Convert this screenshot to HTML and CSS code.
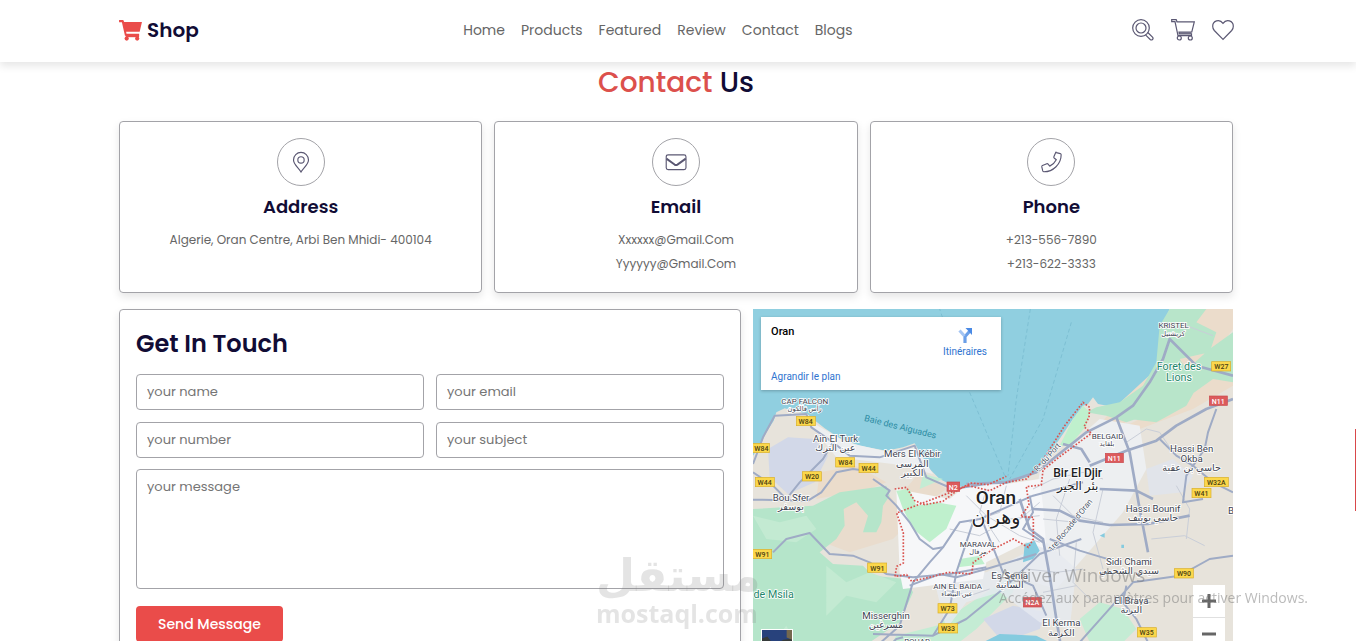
FILE: index.html
```
<!DOCTYPE html>
<html lang="en">
<head>
    <meta charset="UTF-8">
    <meta name="viewport" content="width=device-width, initial-scale=1.0">
    <title>Shop - Contact Us</title>
    <link rel="stylesheet" href="styles.css">
</head>
<body>

<header class="header">
    <a href="#" class="logo">
        <svg viewBox="0 0 24 22"><path d="M0 0h4.4l1 2H24l-2.4 10.400H7.400l.4 2H21v2H6.200L3 2.400H0z"/><circle cx="8" cy="19.500" r="2.200"/><circle cx="19" cy="19.500" r="2.200"/><path d="M7 15h14v3H7z"/></svg>
        Shop
    </a>

    <nav class="navbar">
        <a href="#home">Home</a>
        <a href="#products">Products</a>
        <a href="#featured">Featured</a>
        <a href="#review">Review</a>
        <a href="#contact">Contact</a>
        <a href="#blogs">Blogs</a>
    </nav>

    <div class="icons">
        <a href="#" aria-label="Search"><svg viewBox="0 0 22 22"><circle cx="9" cy="9" r="8.300"/><circle cx="9" cy="9" r="5"/><path d="M13.500 15.800l4.700 4.700q1.200 1 2.300 0t0-2.300l-4.700-4.700"/></svg></a>
        <a href="#" aria-label="Cart"><svg class="cart" viewBox="0 0 24 22"><path d="M.7.700h4.500l.8 2.100h17.300L20.800 13H8l.3 1.800h12.200v1.800H7L4 2.700H.7z"/><path d="M8 13.900h12.500"/><circle cx="8.300" cy="19" r="2"/><circle cx="19.300" cy="19" r="2"/></svg></a>
        <a href="#" aria-label="Favourites"><svg viewBox="0 0 22 22"><path d="M11 20.300L2.300 11.500Q.7 9.700.7 7.200C.7 1.600 7.600-.6 11 4.300 14.400-.6 21.300 1.600 21.300 7.200q0 2.500-1.600 4.300z"/></svg></a>
    </div>
</header>

<main class="contact" id="contact">
    <h1 class="heading"><span>Contact</span> Us</h1>

    <div class="icons-container">
        <div class="box">
            <svg class="box-icon" viewBox="0 0 48 48"><path d="M24 34.500C21.500 30 16.200 26.500 16.200 21.800a7.800 7.800 0 0 1 15.600 0C31.800 26.500 26.500 30 24 34.500z"/><circle cx="24" cy="21.800" r="3.300"/></svg>
            <h3>Address</h3>
            <p>Algerie, Oran Centre, Arbi Ben Mhidi- 400104</p>
        </div>
        <div class="box">
            <svg class="box-icon" viewBox="0 0 48 48"><rect x="13.800" y="16.500" width="20.600" height="15.500" rx="2"/><path class="thick" d="M14 20.500l8.500 6.200q1.500 1 3 0l8.700-6.200"/></svg>
            <h3>Email</h3>
            <p>Xxxxxx@Gmail.Com</p>
            <p>Yyyyyy@Gmail.Com</p>
        </div>
        <div class="box">
            <svg class="box-icon" viewBox="0 0 48 48"><path d="M29.500 14.200l4.200 1q.9.300.9 1.200c0 9.700-8.300 17.800-18 17.800q-.9 0-1.200-.9l-1-4.200q-.2-1 .7-1.400l4.500-1.900q.7-.3 1.300.3l1.800 2.200c3.100-1.500 5.300-3.700 6.800-6.700l-2.200-1.800q-.6-.6-.3-1.300l1.900-4.500q.3-.7.600.2z"/></svg>
            <h3>Phone</h3>
            <p>+213-556-7890</p>
            <p>+213-622-3333</p>
        </div>
    </div>

    <div class="row">
        <form action="">
            <h2>Get In Touch</h2>
            <div class="inputBox">
                <input type="text" placeholder="your name" aria-label="your name">
                <input type="email" placeholder="your email" aria-label="your email">
                <input type="text" placeholder="your number" aria-label="your number">
                <input type="text" placeholder="your subject" aria-label="your subject">
            </div>
            <textarea placeholder="your message" aria-label="your message"></textarea>
            <button type="submit" class="btn">Send Message</button>
        </form>

        <div class="map">
            <svg class="map-canvas" viewBox="0 0 1440 1050" preserveAspectRatio="xMinYMin slice">
                <!-- land -->
                <path fill="#e7e3db" d="M0 440L20 410 40 370 62 335 70 310 95 298 130 308 160 312 180 330 215 358 260 388 320 410 400 425 450 415 485 403 500 430 530 480 560 510 600 530 650 535 700 528 760 525 820 505 850 485 885 440 930 375 960 330 990 290 1005 285 1020 265 1035 285 1070 292 1100 285 1140 270 1170 240 1195 205 1215 150 1225 100 1222 60 1250 0H1440V1050H0z"/>
                <path fill="#ebdccb" d="M1250 0h190v60l-60 80-110 60-90 60-70 90-90 20 60-70 130-120zM200 490l110-20 90 50-50 20-160 30zM1080 370l120-60 100-50 80-90 60-30v90l-120 70-160 60z"/>
                <path fill="#e9dccd" d="M260 560l80-20 70 20 60 80-50 50-130 40-80-30zM500 490l80 50-70 50-60-40z"/>
                <!-- vegetation -->
                <path fill="#b8e5ca" d="M1250 0h110l-30 40 60 30-20 60-90 20 40 60-50 40-60 60-90 30-60-20-60-10 30-15 70-15 70-50 40-70 10-110zM1370 120l70-50v150l-60-10-70 50-40-50zM1180 260l90-50 70 10-40 70-90 50-80-10z"/>
                <path fill="#b5e5ca" d="M0 600L90 595 180 590 260 550 330 540 400 530 410 560 390 590 385 640 370 670 330 670 345 620 310 580 272 600 275 650 250 690 200 730 240 765 330 770 360 800 460 810 480 850 440 940 350 1000 330 1050H0z"/>
                <path fill="#c3ead2" d="M0 620l80 20 80-20 30 40-60 40-90-10zM220 770l60 50 70-30 80 30-60 60-90-20-60 60zM60 1000l40-50 50 100H50z"/>
                <path fill="#c4ecd4" d="M430 980l120-30 120-80 120-80-10 60-110 110-90 70H400zM980 930l60-50 70 20 40 60-50 50-90-10zM510 495l60 15-70 30z"/>
                <!-- built-up areas -->
                <path fill="#d2d8e8" d="M45 420l60-35 80 5 40 50-40 80-80 35-55-50z"/>
                <path fill="#d2d8e8" d="M690 930l90-40 100 20-20 50-110 40z"/>
                <path fill="#e1e4ea" d="M1180 480l80-30 60 50-30 50-100 10z"/>
                <path fill="#edeff1" d="M160 330l120 70 130 30 80-15 50 80-120-30-170-20zM860 490l180-160 120 20 20 130-70 130-130 150-70 80-100-30z"/>
                <path fill="#e6eaf0" d="M540 800l160-10 180-90 90 80-20 180-90-20-120-90-100 30-60 80z" opacity=".8"/>
                <path fill="#f6f7f9" d="M430 540l160 30 60-50 110 5 100-15 10 80 10 130-60-20-120 60-10 50-240 30-10-50z"/>
                <path fill="#bff0cd" d="M430 545l40-5 20 50 60-10 60 10-30 70-50 40-50-40-30-60zM920 410l40-80 30-40 20 20-10 40-50 60zM620 750l60-10 15 25-80 10z"/>
                <path fill="#85cbdf" d="M815 705l30-10 15 30-20 25-30 10zM690 1000l50-25 110 5 60 30 20 40H700zM1040 680l15-8v14zM1105 707h8v10h-8z"/>
                <!-- ferry lines -->
                <path class="ferry" d="M650 250L755 500M832 0L790 270 765 500M955 40L870 330 770 510M600 120L560 0"/>
                <!-- small streets -->
                <path class="street" d="M590 660l90 20 90-50 90-10M640 560l60 60 100 60 60 20M700 540l-20 70 60 90M760 530l-20 80-90 30M900 560l60 60 90 20M950 510l-40 120 10 110M970 700l-10 120 60 60M1050 540l-30 130 30 110M820 780l90 10 80-10M870 850l100-20M560 840l90 20 60-20M1120 400l60-40 40 10 40 60M1195 690l100-10 60 30M1300 50l80 30M1300 690l10-90-40-70M840 540l60-30 90-20 60 20M790 640l70-60M870 630l100 10"/>
                <!-- main roads -->
                <path class="road" d="M0 465L30 385 65 320 160 315 175 355 240 400 210 450 140 520 100 570 60 530 0 490M0 572L165 575 205 550 250 490 300 480 370 490M360 510L410 545 400 560 430 590 470 640 500 690 540 720 570 715"/>
                <path class="road" d="M240 400L290 440 380 445 485 410 520 505 600 540 700 525M60 730L100 690 170 672 230 735 300 740 350 760 400 795 480 805 590 795 700 775"/>
                <path class="road" d="M350 1030L440 950 480 820 530 760 570 715 620 640 680 630 840 560 990 520M360 975L540 980 640 930 750 840 860 735 985 690M590 900L610 790 660 640M690 640L750 790 840 830 880 920M380 1040L430 990 450 985"/>
                <path class="road wide" d="M640 525L760 520 850 490 1000 370 1090 325 1140 290 1190 220 1230 150 1250 90 1330 170 1440 200M1090 325L1130 430 1160 600 1185 730M1010 470L1120 425 1210 395 1270 350 1360 300 1440 270M930 405L985 420 1010 460M1040 540L1150 545 1200 570M840 600L920 605 980 635 1070 648 1185 645 1310 620M800 570L830 660 870 690 890 800 910 930 930 1050"/>
                <path class="road" d="M980 1000L1060 910 1140 820 1280 800 1370 750 1440 740M890 690L980 725 1080 755M1120 830L1110 880 1150 930 1190 1010 1230 1050M1390 300L1365 370 1355 420 1300 500 1290 580 1350 570M1220 390L1270 440 1320 470 1380 520 1440 550M830 560L840 610 810 660 870 700M470 830L560 795 610 805 700 780 850 735M540 980L590 900"/>
                <!-- city limits -->
                <path class="limit" d="M425 540l35-5 25 40 30 12 55-10 45-35 40-20 50 5 55-25M645 530l65 15 50-25 60-10 45-50 70-110 55-70 20 15-2 30-15 28 22 20-95 70-50 40-5 45-45 5 8 55-25 35 38 2v65l-15 25-45-25-60 30-60 40-5 35-70-5-45 12-65 15-15-20-35 5 5-30 20-10v-90l-20-60z"/>

                <!-- route numbers -->
                <g class="route">
                    <rect x="130" y="322" width="57" height="28"/><text x="158" y="345">W84</text>
                    <rect x="-8" y="403" width="57" height="28"/><text x="25" y="426">W84</text>
                    <rect x="248" y="446" width="57" height="28"/><text x="277" y="469">W84</text>
                    <rect x="318" y="463" width="57" height="28"/><text x="347" y="486">W44</text>
                    <rect x="148" y="488" width="57" height="28"/><text x="177" y="511">W20</text>
                    <rect x="7" y="505" width="57" height="28"/><text x="35" y="528">W44</text>
                    <rect x="-1" y="721" width="57" height="28"/><text x="28" y="744">W91</text>
                    <rect x="344" y="762" width="57" height="28"/><text x="373" y="785">W91</text>
                    <rect x="555" y="884" width="57" height="28"/><text x="584" y="907">W73</text>
                    <rect x="557" y="944" width="57" height="28"/><text x="585" y="967">W33</text>
                    <rect x="1376" y="158" width="57" height="28"/><text x="1405" y="181">W27</text>
                    <rect x="1354" y="505" width="72" height="28"/><text x="1390" y="528">W32A</text>
                    <rect x="1317" y="538" width="57" height="28"/><text x="1345" y="561">W41</text>
                    <rect x="1264" y="779" width="57" height="28"/><text x="1293" y="802">W90</text>
                    <rect x="1153" y="956" width="57" height="28"/><text x="1181" y="979">W35</text>
                </g>
                <g class="route national">
                    <rect x="582" y="519" width="38" height="28"/><text x="601" y="542">N2</text>
                    <rect x="1057" y="433" width="54" height="28"/><text x="1084" y="456">N11</text>
                    <rect x="1369" y="261" width="54" height="28"/><text x="1396" y="284">N11</text>
                    <rect x="811" y="866" width="54" height="28"/><text x="838" y="889">N2A</text>
                </g>

                <!-- places -->
                <g class="place small">
                    <text x="155" y="284">CAP FALCON</text><text x="155" y="305">رأس فالكون</text>
                    <text x="1262" y="57">KRISTEL</text><text x="1260" y="80">كريشتيل</text>
                    <text x="1064" y="389">BELGAID</text><text x="1062" y="412">بلقايد</text>
                    <text x="675" y="713">MARAVAL</text><text x="675" y="735">مرفال</text>
                    <text x="614" y="840">AIN EL BAIDA</text><text x="612" y="862">عين البيضاء</text>
                    <text x="492" y="1006">BOUAR</text>
                </g>
                <g class="place">
                    <text x="248" y="400">Ain El Turk</text><text x="247" y="427">عين الترك</text>
                    <text x="478" y="445">Mers El Kébir</text><text x="478" y="474">المرسى</text><text x="478" y="502">الكبير</text>
                    <text x="114" y="575">Bou Sfer</text><text x="114" y="603">بوسفر</text>
                    <text x="1316" y="430">Hassi Ben</text><text x="1316" y="459">Okba</text><text x="1316" y="487">حاسي بن عقبة</text>
                    <text x="1200" y="609">Hassi Bounif</text><text x="1200" y="637">حاسي بونيف</text>
                    <text x="1128" y="767">Sidi Chami</text><text x="1128" y="795">سيدي الشحمي</text>
                    <text x="770" y="809">Es Senia</text><text x="770" y="837">السانية</text>
                    <text x="1135" y="885">El Braya</text><text x="1135" y="913">البرية</text>
                    <text x="925" y="952">El Kerma</text><text x="925" y="980">الكرمة</text>
                    <text x="399" y="930">Misserghin</text><text x="399" y="958">مسرغين</text>
                    <text x="1434" y="614">B</text>
                </g>
                <g class="place town">
                    <text x="974" y="504">Bir El Djir</text><text x="974" y="542">بئر الجير</text>
                </g>
                <g class="place city">
                    <text x="729" y="584">Oran</text><text x="729" y="644">وهران</text>
                </g>
                <g class="place forest">
                    <text x="1278" y="182">Foret des</text><text x="1278" y="215">Lions</text><text x="62" y="866">de Msila</text>
                </g>
                <text class="bay" transform="translate(440 362) rotate(14)">Baie des Aiguades</text>
                <text class="way" transform="translate(889 450) rotate(-48)">R. du Port</text>
                <text class="way" transform="translate(958 654) rotate(-51)">1re Rocade d'Oran</text>
            </svg>

            <div class="map-card">
                <div>
                    <strong>Oran</strong>
                    <a href="#">Agrandir le plan</a>
                </div>
                <a href="#" class="directions">
                    <svg viewBox="0 0 16 16"><path fill="none" stroke="#6a9fe8" stroke-width="3.200" d="M8 16V9.500L12.500 4.500"/><path fill="none" stroke="#a4c5f3" stroke-width="3" d="M7.500 9L2.500 3.500"/><path fill="#4a8ae5" d="M8.500 1H15v7z"/></svg>
                    Itinéraires
                </a>
            </div>

            <button type="button" class="satellite" aria-label="Satellite view">
                <svg viewBox="0 0 28 28"><path fill="#28427c" d="M0 0h28v28H0z"/><path fill="#363b3a" d="M0 8l5-2 3 4 7 2 5-3 8-1v20H0z"/><path fill="#74684e" d="M23 0h5v9l-5-2z"/></svg>
            </button>
            <div class="zoom">
                <button type="button" aria-label="Zoom in"><svg viewBox="0 0 14 14"><path d="M0 7h14M7 0v14"/></svg></button>
                <button type="button" aria-label="Zoom out"><svg viewBox="0 0 14 14"><path d="M0 7h14"/></svg></button>
            </div>
        </div>
    </div>
</main>

<div class="brand-mark">
    <span lang="ar">مستقل</span>
    <span>mostaql.com</span>
</div>
<div class="activation">
    <span class="activation-title">Activer Windows</span>
    <span>Accédez aux paramètres pour activer Windows.</span>
</div>
<div class="scroll-thumb"></div>

</body>
</html>
```
FILE: styles.css
```
:root {
    --red: #ea4c4a;
    --navy: #110c35;
    --gray: #666;
    --border: 1px solid #a3a3a8;
    --shadow: 0 4px 8px rgba(0, 0, 0, 0.1);
}

* {
    margin: 0;
    padding: 0;
    box-sizing: border-box;
    font-family: Poppins, Inter, sans-serif;
    text-decoration: none;
    outline: none;
}

body {
    height: 100vh;
    overflow: hidden;
    background: #fff;
    color: var(--gray);
}

.header {
    position: relative;
    display: flex;
    align-items: center;
    justify-content: space-between;
    height: 62px;
    padding: 0 122px 2px 119px;
    background: #fff;
    box-shadow: var(--shadow);
}

.logo {
    display: flex;
    align-items: center;
    gap: 5px;
    color: var(--navy);
    font-size: 20px;
    font-weight: 600;
}

.logo svg {
    width: 23px;
    height: 21px;
    fill: var(--red);
}

.navbar {
    display: flex;
    gap: 16px;
}

.navbar a {
    color: var(--gray);
    font-size: 14px;
}

.icons {
    display: flex;
    align-items: center;
    gap: 17px;
    padding-left: 15px;
}

.icons a {
    display: flex;
}

.icons svg {
    width: 22px;
    height: 22px;
    fill: none;
    stroke: #5b5873;
    stroke-width: 1.2;
}

.icons .cart {
    width: 24px;
}

.contact {
    padding: 0 123px 16px 119px;
}

.heading {
    padding-bottom: 17px;
    color: var(--navy);
    font-size: 28px;
    font-weight: 500;
    line-height: 42px;
    text-align: center;
}

.heading span {
    color: #dc504c;
}

.icons-container {
    display: grid;
    grid-template-columns: repeat(3, 1fr);
    gap: 12px;
}

.box {
    padding: 16px;
    border: var(--border);
    border-radius: 4px;
    box-shadow: var(--shadow);
    text-align: center;
}

.box-icon {
    display: block;
    width: 48px;
    height: 48px;
    margin: 0 auto;
    border: var(--border);
    border-radius: 50%;
    fill: none;
    stroke: #5b5873;
    stroke-width: 1.2;
}

.box-icon .thick {
    stroke-width: 2;
}

.box h3 {
    color: var(--navy);
    font-size: 18px;
    font-weight: 600;
    line-height: 42px;
}

.box p {
    font-size: 12px;
    line-height: 24px;
}

.row {
    display: grid;
    grid-template-columns: 35fr 27fr;
    gap: 12px;
    margin-top: 16px;
}

form {
    padding: 16px;
    border: var(--border);
    border-radius: 4px;
    box-shadow: var(--shadow);
}

form h2 {
    padding-bottom: 12px;
    color: var(--navy);
    font-size: 24px;
    font-weight: 600;
    line-height: 36px;
}

.inputBox {
    display: grid;
    grid-template-columns: 1fr 1fr;
    gap: 12px;
}

form input,
form textarea {
    display: block;
    width: 100%;
    padding: 8px 10px;
    border: var(--border);
    border-radius: 4px;
    background: none;
    color: var(--gray);
    font-size: 13px;
    line-height: 18px;
}

form input {
    height: 36px;
}

form textarea {
    height: 120px;
    margin: 11px 0 17px;
    resize: none;
}

form ::placeholder {
    color: #757575;
}

.btn {
    height: 36px;
    padding: 0 22px;
    border: none;
    border-radius: 4px;
    background: var(--red);
    color: #fff;
    font-size: 14px;
    font-weight: 500;
    cursor: pointer;
}

/* map */
.map {
    position: relative;
    overflow: hidden;
    background: #90cfe0;
}

.map-canvas {
    position: absolute;
    inset: 0;
    width: 100%;
    height: 100%;
}

.map text {
    font-family: Roboto, "DejaVu Sans", sans-serif;
    text-anchor: middle;
}

.ferry {
    fill: none;
    stroke: #73b6cb;
    stroke-width: 2;
    stroke-dasharray: 12 8;
}

.street {
    fill: none;
    stroke: #c9ced8;
    stroke-width: 3;
}

.road {
    fill: none;
    stroke: #9fabc5;
    stroke-width: 6;
    stroke-linejoin: round;
}

.wide {
    stroke-width: 8;
}

.limit {
    fill: none;
    stroke: #d9534f;
    stroke-width: 5;
    stroke-dasharray: 5 5;
}

.route rect {
    fill: #fbd74b;
    stroke: #d9ae2a;
    stroke-width: 2;
}

.route text {
    fill: #4b3f12;
    font-size: 21px;
    font-weight: 500;
}

.route.national rect {
    fill: #dc5a5c;
    stroke: #c94a4d;
}

.route.national text {
    fill: #fff;
}

.place text {
    fill: #3d4350;
    stroke: #fff;
    stroke-width: 5;
    paint-order: stroke;
    font-size: 29px;
}

.small text {
    font-size: 24px;
}

.small text:nth-child(even) {
    font-size: 20px;
}

.town text {
    fill: #202124;
    font-size: 36px;
    font-weight: 500;
}

.city text {
    fill: #202124;
    font-size: 57px;
    font-weight: 500;
}

.forest text {
    fill: #24866a;
    font-size: 32px;
}

.bay {
    fill: #2d8ca3;
    font-size: 27px;
}

.way {
    fill: #4a5568;
    stroke: #fff;
    stroke-width: 4;
    paint-order: stroke;
    font-size: 24px;
}

.map-card {
    position: absolute;
    top: 8px;
    left: 8px;
    display: flex;
    justify-content: space-between;
    width: 50%;
    height: 73px;
    padding: 8px 14px 6px 10px;
    background: #fff;
    box-shadow: 0 1px 3px rgba(0, 0, 0, 0.25);
}

.map-card div {
    display: flex;
    flex-direction: column;
    justify-content: space-between;
}

.map-card a,
.map-card strong {
    font-family: Roboto, sans-serif;
    font-size: 10px;
    line-height: 14px;
}

.map-card strong {
    color: #000;
    font-size: 11px;
    font-weight: 500;
}

.map-card a {
    color: #2f74d0;
}

.map-card .directions {
    display: flex;
    flex-direction: column;
    align-items: center;
    gap: 2px;
    padding-top: 2px;
}

.directions svg {
    width: 16px;
    height: 16px;
}

.satellite {
    position: absolute;
    left: 8px;
    bottom: 0;
    width: 32px;
    height: 30px;
    border: 1px solid #fff;
    overflow: hidden;
}

.satellite svg {
    display: block;
    width: 100%;
}

.zoom {
    position: absolute;
    right: 8px;
    bottom: 10px;
    width: 32px;
    background: #fff;
}

.zoom button {
    display: flex;
    align-items: center;
    justify-content: center;
    width: 100%;
    height: 32px;
    border: none;
    background: none;
}

.zoom button + button {
    border-top: 1px solid #e0e0e0;
}

.zoom svg {
    width: 14px;
    height: 14px;
    stroke: #666;
    stroke-width: 3;
}

/* overlays */
.brand-mark,
.activation {
    position: fixed;
    display: flex;
    flex-direction: column;
    pointer-events: none;
    white-space: nowrap;
}

.brand-mark {
    left: 596px;
    bottom: 13px;
    color: rgba(120, 120, 120, 0.2);
}

.brand-mark span {
    font-family: "Open Sans", sans-serif;
    font-size: 25px;
    font-weight: 700;
    line-height: 30px;
}

.brand-mark span:first-child {
    font-family: "DejaVu Sans", sans-serif;
    font-size: 45px;
    line-height: 44px;
    text-align: center;
}

.activation {
    right: 48px;
    bottom: 32px;
    color: rgba(120, 120, 120, 0.5);
}

.activation span {
    font-family: "Open Sans", sans-serif;
    font-size: 14px;
    line-height: 22px;
}

.activation .activation-title {
    font-size: 19px;
    line-height: 24px;
}

.scroll-thumb {
    position: fixed;
    top: 67%;
    right: 0;
    width: 1px;
    height: 82px;
    background: #d9484a;
}
```
